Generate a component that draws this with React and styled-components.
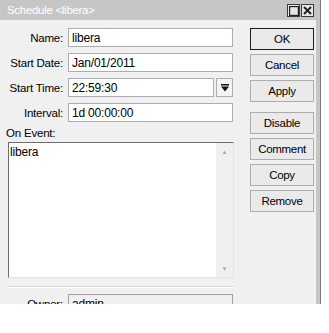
import React from "react";
import styled, { createGlobalStyle } from "styled-components";

const GlobalStyle = createGlobalStyle`
  html, body {
    margin: 0;
    padding: 0;
    background: #ffffff;
  }
  body {
    font-family: "Liberation Sans", Arial, sans-serif;
    font-size: 11px;
    color: #000;
  }
`;

const fields = [
  { label: "Name:", value: "libera" },
  { label: "Start Date:", value: "Jan/01/2011" },
  { label: "Start Time:", value: "22:59:30", drop: true },
  { label: "Interval:", value: "1d 00:00:00" },
];

const mainButtons = ["OK", "Cancel", "Apply"];
const extraButtons = ["Disable", "Comment", "Copy", "Remove"];

const App = () => {
  return (
    <>
      <GlobalStyle />
      <Window>
        <TitleBar>
          <Title>Schedule &lt;libera&gt;</Title>
          <TitleButtons>
            <TitleButton>
              <svg width="10" height="10" viewBox="0 0 10 10">
                <rect x="0.5" y="0.5" width="9" height="9" fill="none" stroke="#222" strokeWidth="1.4" />
              </svg>
            </TitleButton>
            <TitleButton>
              <svg width="9" height="9" viewBox="0 0 9 9">
                <path d="M1 1 L8 8 M8 1 L1 8" stroke="#222" strokeWidth="2" />
              </svg>
            </TitleButton>
          </TitleButtons>
        </TitleBar>
        <Body>
          <FormColumn>
            {fields.map((f) => (
              <FieldRow key={f.label}>
                <Label>{f.label}</Label>
                <InputGroup>
                  <Input>{f.value}</Input>
                  {f.drop && (
                    <DropButton>
                      <svg width="8" height="8" viewBox="0 0 8 8">
                        <rect x="0" y="0" width="8" height="1.5" fill="#111" />
                        <path d="M0 2.5 H8 L4 7.5 Z" fill="#111" />
                      </svg>
                    </DropButton>
                  )}
                </InputGroup>
              </FieldRow>
            ))}
            <SectionLabel>On Event:</SectionLabel>
            <ScriptBox>
              <ScriptText>libera</ScriptText>
              <ScrollBar>
                <Arrow>▲</Arrow>
                <Arrow>▼</Arrow>
              </ScrollBar>
            </ScriptBox>
            <Separator />
            <FieldRow>
              <Label>Owner:</Label>
              <InputGroup>
                <Input $readonly>admin</Input>
              </InputGroup>
            </FieldRow>
          </FormColumn>
          <ButtonColumn>
            <ButtonGroup>
              {mainButtons.map((b) => (
                <Button key={b} $default={b === "OK"}>
                  {b}
                </Button>
              ))}
            </ButtonGroup>
            <ButtonGroup>
              {extraButtons.map((b) => (
                <Button key={b}>{b}</Button>
              ))}
            </ButtonGroup>
          </ButtonColumn>
        </Body>
      </Window>
    </>
  );
};

const Window = styled.div`
  width: 320px;
  height: 304px;
  background-color: #c6c6c6;
  border-right: 1px solid #7a7a7a;
  display: flex;
  flex-direction: column;
  overflow: hidden;
`;

const TitleBar = styled.div`
  height: 20px;
  display: flex;
  align-items: center;
  justify-content: space-between;
  padding-left: 7px;
  padding-right: 6px;
  flex-shrink: 0;
`;

const Title = styled.span`
  color: #ffffff;
  font-family: "Liberation Sans", Arial, sans-serif;
  font-size: 11.5px;
  letter-spacing: -0.3px;
`;

const TitleButtons = styled.div`
  display: flex;
  gap: 1px;
  margin-top: 1px;
`;

const TitleButton = styled.div`
  width: 13px;
  height: 13px;
  box-sizing: border-box;
  border: 1px solid #3a3a3a;
  background-color: #e6e6e6;
  display: flex;
  align-items: center;
  justify-content: center;
`;

const Body = styled.div`
  flex: 1;
  background-color: #f0f0f0;
  margin-right: 4px;
  display: flex;
  padding-top: 8px;
`;

const FormColumn = styled.div`
  width: 234px;
  display: flex;
  flex-direction: column;
  gap: 6px;
`;

const FieldRow = styled.div`
  display: flex;
  align-items: center;
  height: 19px;
`;

const Label = styled.div`
  width: 68px;
  text-align: right;
  padding-right: 5px;
  box-sizing: border-box;
  white-space: nowrap;
  font-size: 11.5px;
  letter-spacing: -0.2px;
`;

const InputGroup = styled.div`
  width: 165px;
  height: 19px;
  display: flex;
  gap: 2px;
`;

const Input = styled.div`
  flex: 1;
  height: 19px;
  box-sizing: border-box;
  border: 1px solid ${(p) => (p.$readonly ? "#a0a0a0" : "#abadb3")};
  background-color: ${(p) => (p.$readonly ? "#f0f0f0" : "#ffffff")};
  padding: 2px 0 0 3px;
  line-height: 14px;
  font-size: 12px;
  letter-spacing: -0.2px;
  white-space: nowrap;
`;

const DropButton = styled.div`
  width: 17px;
  height: 19px;
  box-sizing: border-box;
  border: 1px solid #adadad;
  background-color: #f3f3f3;
  display: flex;
  align-items: center;
  justify-content: center;
`;

const SectionLabel = styled.div`
  margin-left: 6px;
  margin-top: -1px;
  height: 13px;
  line-height: 13px;
  margin-bottom: -4px;
  font-size: 11.5px;
  letter-spacing: -0.2px;
`;

const ScriptBox = styled.div`
  margin-left: 8px;
  width: 226px;
  height: 136px;
  box-sizing: border-box;
  border: 1px solid #828790;
  border-top-color: #6d6d6d;
  border-left-color: #6d6d6d;
  border-right-color: #e3e3e3;
  border-bottom-color: #e3e3e3;
  background-color: #ffffff;
  display: flex;
  flex-shrink: 0;
`;

const ScriptText = styled.div`
  flex: 1;
  padding: 2px 0 0 1px;
  font-size: 12px;
  letter-spacing: -0.2px;
`;

const ScrollBar = styled.div`
  width: 17px;
  background-color: #f0f0f0;
  display: flex;
  flex-direction: column;
  justify-content: space-between;
  align-items: center;
  padding: 6px 0 5px;
`;

const Arrow = styled.span`
  font-size: 6px;
  color: #a8a8a8;
  line-height: 6px;
`;

const Separator = styled.div`
  margin-left: 8px;
  margin-top: 2px;
  width: 226px;
  height: 1px;
  background-color: #d9d9d9;
  border-bottom: 1px solid #ffffff;
  flex-shrink: 0;
`;

const ButtonColumn = styled.div`
  margin-left: 16px;
  width: 64px;
  display: flex;
  flex-direction: column;
  gap: 10px;
`;

const ButtonGroup = styled.div`
  display: flex;
  flex-direction: column;
  gap: 4px;
`;

const Button = styled.div`
  height: 22px;
  box-sizing: border-box;
  border: 1px solid ${(p) => (p.$default ? "#1a1a1a" : "#adadad")};
  background-color: #eaeaea;
  display: flex;
  align-items: center;
  justify-content: center;
  font-size: 11.5px;
  letter-spacing: -0.3px;
`;

export default App;
